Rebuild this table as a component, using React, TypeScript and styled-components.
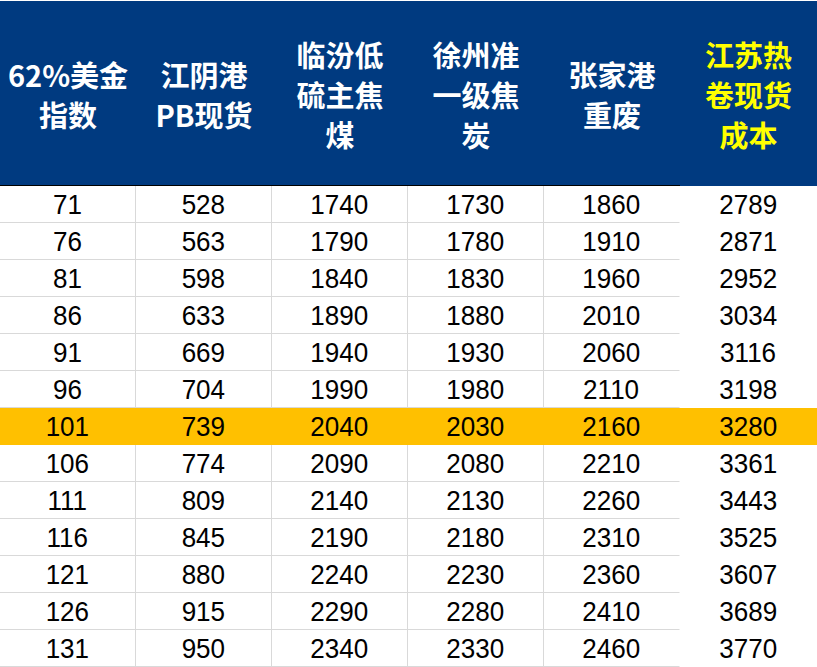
import React from "react";
import styled, { createGlobalStyle } from "styled-components";

const Global = createGlobalStyle`
  html, body { margin: 0; padding: 0; background: #ffffff; }
  body { font-family: "Liberation Sans", Arial, sans-serif; }
`;

const Sheet = styled.div`
  width: 817px;
  padding-top: 1px;
  background: #ffffff;
  display: grid;
  grid-template-columns: repeat(5, 136px) 137px;
`;

const HeadCell = styled.div<{ $accent?: boolean }>`
  height: 185px;
  box-sizing: border-box;
  background: #003a80;
  border-bottom: 1px solid ${(p) => (p.$accent ? "#003a80" : "#000000")};
  display: flex;
  align-items: center;
  justify-content: center;
  text-align: center;
  color: ${(p) => (p.$accent ? "#ffff00" : "#ffffff")};
  font-family: "Noto Sans CJK SC", "Noto Sans", sans-serif;
  font-weight: 700;
  font-size: 29px;
  line-height: 40px;
  padding-top: 2px;
`;

const Line = styled.div`
  white-space: nowrap;
`;

const Cell = styled.div<{ $hl?: boolean; $col: number }>`
  height: 37px;
  box-sizing: border-box;
  background: ${(p) => (p.$hl ? "#ffc000" : "#ffffff")};
  border-bottom: 1px solid
    ${(p) => (p.$hl ? "#ffc000" : p.$col === 5 ? "#ffffff" : "#d9d9d9")};
  border-right: 1px solid
    ${(p) => (p.$hl ? "#ffc000" : p.$col >= 4 ? "#ffffff" : "#d9d9d9")};
  display: flex;
  align-items: center;
  justify-content: center;
  color: #000000;
  font-family: "Liberation Sans", Arial, sans-serif;
  font-size: 28px;
  padding-top: 2px;
`;

const Num = styled.span`
  display: inline-block;
  transform: scaleX(0.93);
`;

const headers: string[][] = [
  ["62%美金", "指数"],
  ["江阴港", "PB现货"],
  ["临汾低", "硫主焦", "煤"],
  ["徐州准", "一级焦", "炭"],
  ["张家港", "重废"],
  ["江苏热", "卷现货", "成本"],
];

const rows: number[][] = [
  [71, 528, 1740, 1730, 1860, 2789],
  [76, 563, 1790, 1780, 1910, 2871],
  [81, 598, 1840, 1830, 1960, 2952],
  [86, 633, 1890, 1880, 2010, 3034],
  [91, 669, 1940, 1930, 2060, 3116],
  [96, 704, 1990, 1980, 2110, 3198],
  [101, 739, 2040, 2030, 2160, 3280],
  [106, 774, 2090, 2080, 2210, 3361],
  [111, 809, 2140, 2130, 2260, 3443],
  [116, 845, 2190, 2180, 2310, 3525],
  [121, 880, 2240, 2230, 2360, 3607],
  [126, 915, 2290, 2280, 2410, 3689],
  [131, 950, 2340, 2330, 2460, 3770],
];

export default function App() {
  return (
    <>
      <Global />
      <Sheet>
        {headers.map((h, i) => (
          <HeadCell key={"h" + i} $accent={i === 5}>
            <div>
              {h.map((l, j) => (
                <Line key={j}>{l}</Line>
              ))}
            </div>
          </HeadCell>
        ))}
        {rows.map((r, ri) =>
          r.map((v, ci) => (
            <Cell key={ri + "-" + ci} $hl={ri === 6} $col={ci}>
              <Num>{v}</Num>
            </Cell>
          ))
        )}
      </Sheet>
    </>
  );
}
